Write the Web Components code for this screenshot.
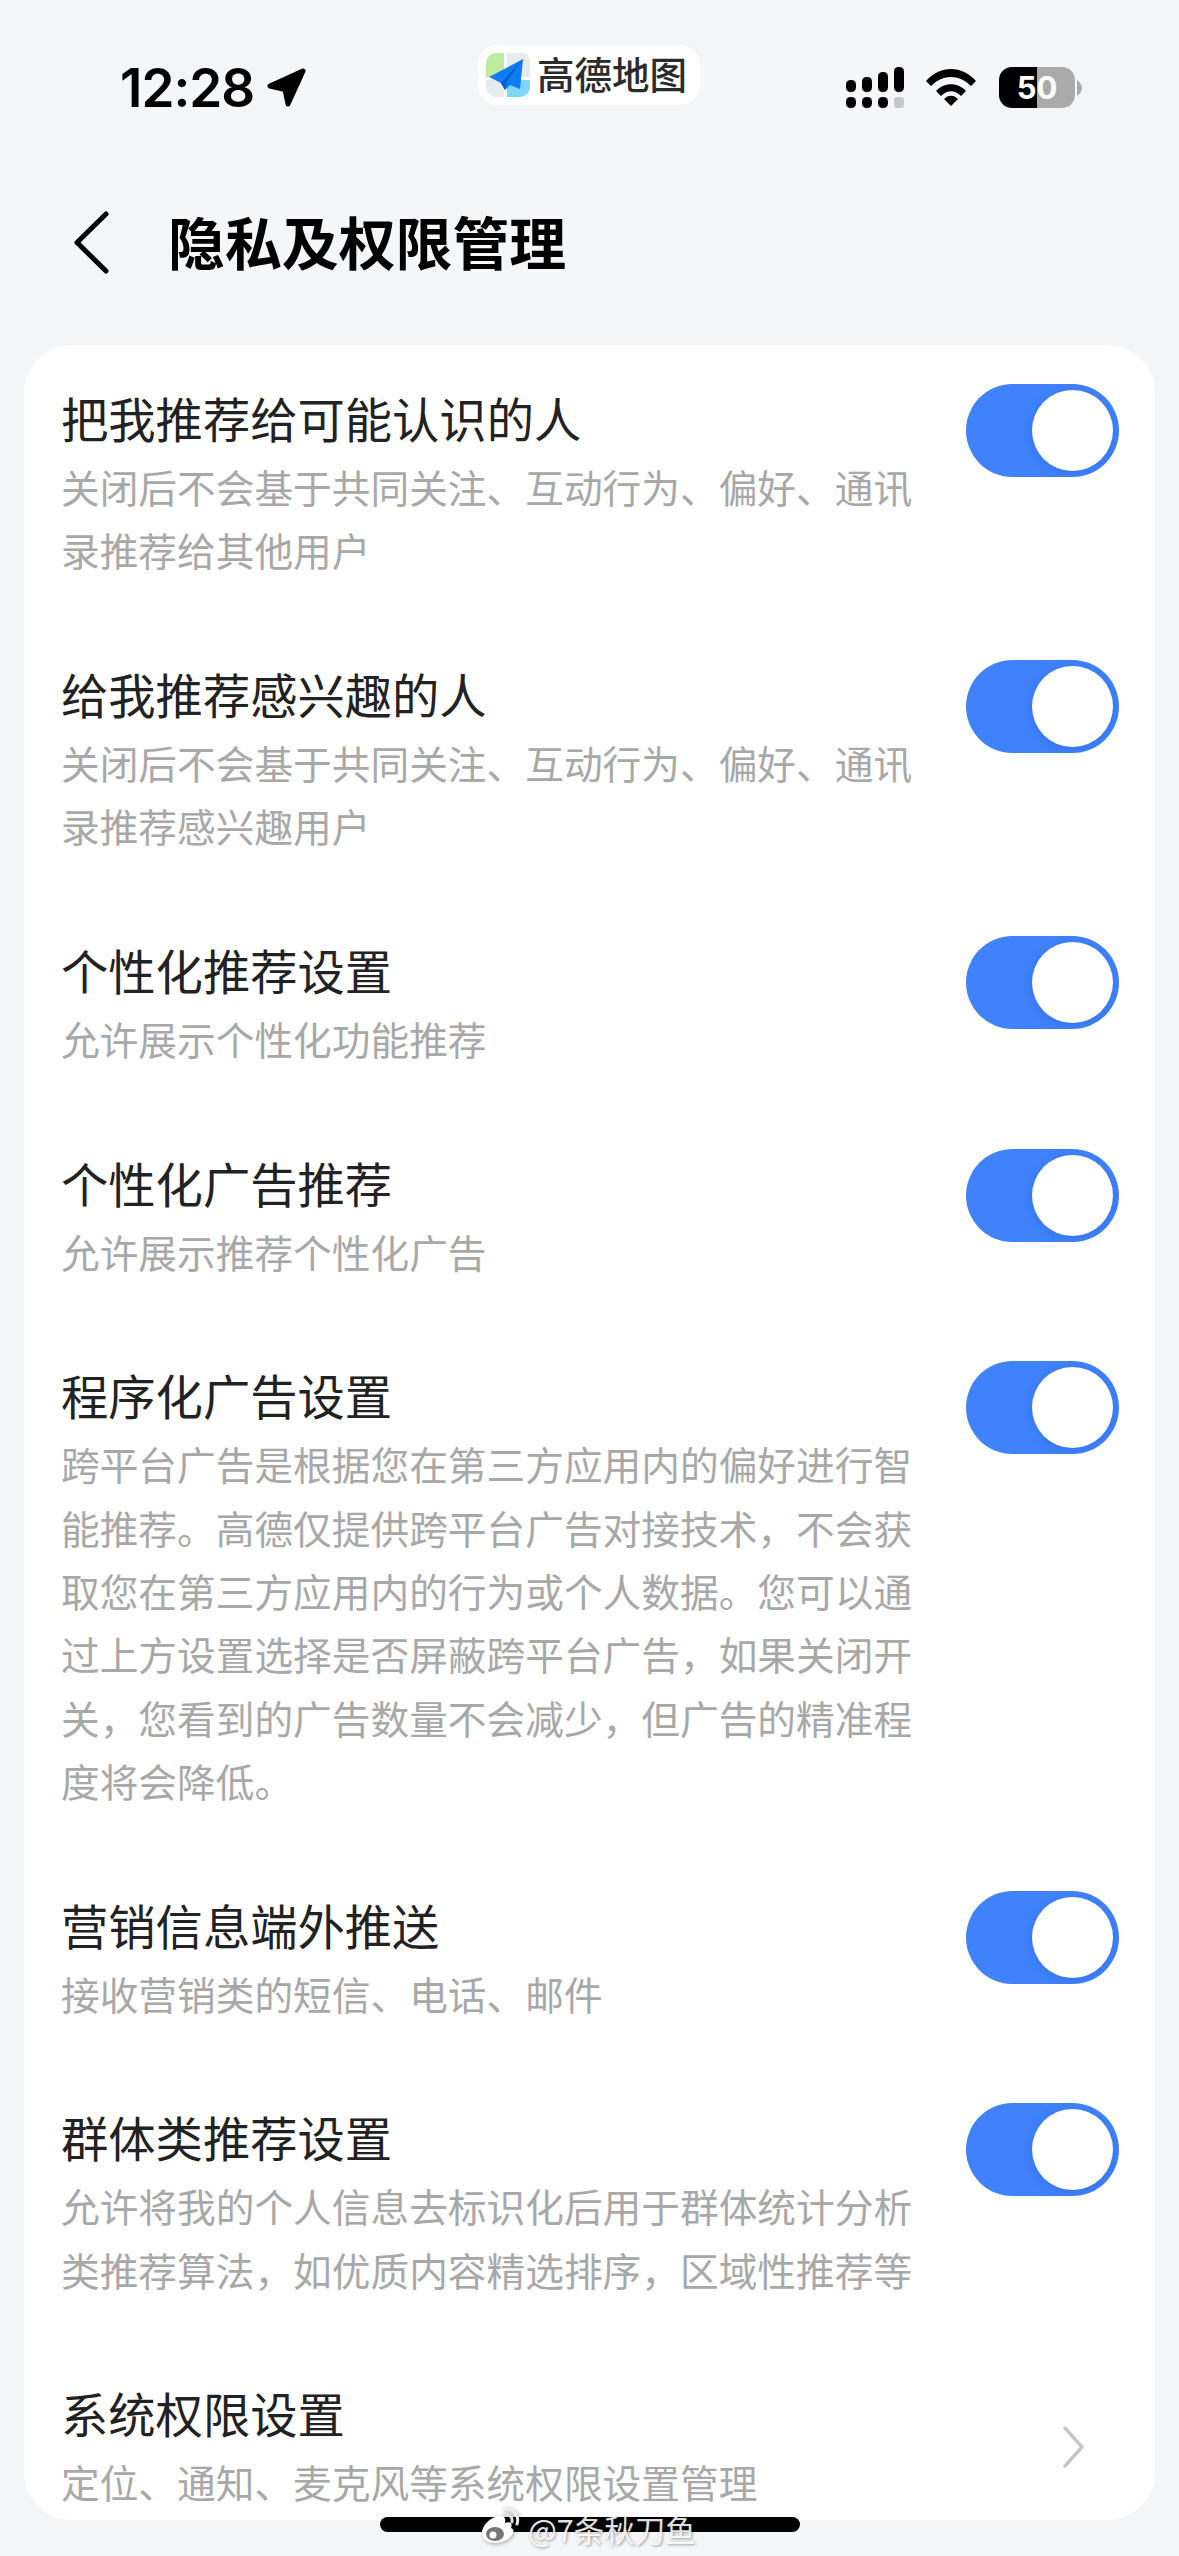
<!DOCTYPE html>
<html lang="zh">
<head>
<meta charset="utf-8">
<title>隐私及权限管理</title>
<style>
  html, body { margin: 0; height: 2556px; overflow: hidden; background: #f5f6f8; }
  body { font-family: "Noto Sans CJK SC", "Noto Sans", sans-serif; }
</style>
</head>
<body>
<privacy-page>
  <status-bar></status-bar>
  <nav-header>隐私及权限管理</nav-header>
  <settings-card>
    <setting-row>
      <span slot="title">把我推荐给可能认识的人</span>
      关闭后不会基于共同关注、互动行为、偏好、通讯录推荐给其他用户
      <toggle-switch slot="action"></toggle-switch>
    </setting-row>
    <setting-row>
      <span slot="title">给我推荐感兴趣的人</span>
      关闭后不会基于共同关注、互动行为、偏好、通讯录推荐感兴趣用户
      <toggle-switch slot="action"></toggle-switch>
    </setting-row>
    <setting-row>
      <span slot="title">个性化推荐设置</span>
      允许展示个性化功能推荐
      <toggle-switch slot="action"></toggle-switch>
    </setting-row>
    <setting-row>
      <span slot="title">个性化广告推荐</span>
      允许展示推荐个性化广告
      <toggle-switch slot="action"></toggle-switch>
    </setting-row>
    <setting-row>
      <span slot="title">程序化广告设置</span>
      跨平台广告是根据您在第三方应用内的偏好进行智能推荐。高德仅提供跨平台广告对接技术，不会获取您在第三方应用内的行为或个人数据。您可以通过上方设置选择是否屏蔽跨平台广告，如果关闭开关，您看到的广告数量不会减少，但广告的精准程度将会降低。
      <toggle-switch slot="action"></toggle-switch>
    </setting-row>
    <setting-row>
      <span slot="title">营销信息端外推送</span>
      接收营销类的短信、电话、邮件
      <toggle-switch slot="action"></toggle-switch>
    </setting-row>
    <setting-row>
      <span slot="title">群体类推荐设置</span>
      允许将我的个人信息去标识化后用于群体统计分析类推荐算法，如优质内容精选排序，区域性推荐等
      <toggle-switch slot="action"></toggle-switch>
    </setting-row>
    <setting-row last center-action>
      <span slot="title">系统权限设置</span>
      定位、通知、麦克风等系统权限设置管理
      <svg slot="action" width="153" height="42" viewBox="0 0 153 42" fill="none" stroke="#c6c6c6" stroke-width="3.4" stroke-linecap="round" stroke-linejoin="round"><path d="M99 2 L116 21 L99 40"/></svg>
    </setting-row>
  </settings-card>
  <home-indicator></home-indicator>
</privacy-page>

<script>
class PrivacyPage extends HTMLElement {
  connectedCallback() {
    this.attachShadow({ mode: 'open' });
    this.shadowRoot.innerHTML = `
      <style>
        :host {
          display: flex;
          flex-direction: column;
          position: relative;
          width: 1179px;
          height: 2556px;
          overflow: hidden;
          background: #f5f6f8;
        }
      </style>
      <slot></slot>
    `;
  }
}

class StatusBar extends HTMLElement {
  connectedCallback() {
    this.attachShadow({ mode: 'open' });
    this.shadowRoot.innerHTML = `
      <style>
        :host {
          display: flex;
          align-items: flex-start;
          height: 120px;
          box-sizing: border-box;
          padding: 45px 97px 0 120px;
          color: #000;
        }
        .left {
          display: flex;
          align-items: center;
          gap: 13px;
          width: 358px;
          height: 50px;
          margin-top: 18px;
        }
        .time {
          font: 600 53px/50px Inter, "Liberation Sans", sans-serif;
          letter-spacing: -1px;
        }
        .badge {
          display: flex;
          align-items: center;
          gap: 7px;
          width: 222px;
          height: 60px;
          box-sizing: border-box;
          padding-left: 8px;
          background: #fff;
          border-radius: 20px;
        }
        .badge span {
          font: 500 37.5px/44px "Noto Sans CJK SC", sans-serif;
          color: #2b2b2b;
          white-space: nowrap;
          margin-top: -5px;
        }
        .right {
          display: flex;
          align-items: center;
          margin-left: auto;
          height: 41px;
          margin-top: 22px;
        }
        .battery {
          width: 76px;
          height: 41px;
          margin-left: 23px;
          border-radius: 13px;
          overflow: hidden;
          background: linear-gradient(90deg, #000 0 50%, #ababab 50% 100%);
          color: #fff;
          font: 700 31px/41px Inter, "Liberation Sans", sans-serif;
          text-align: center;
        }
        .nub { margin-left: 2px; }
        .wifi { margin-left: 22px; }
      </style>
      <div class="left">
        <span class="time">12:28</span>
        <svg width="40" height="40" viewBox="0 0 40 40"><path d="M36 3 L3 18 L18 21.5 L21 36 Z" fill="#000" stroke="#000" stroke-width="5" stroke-linejoin="round"/></svg>
      </div>
      <div class="badge">
        <svg width="44" height="44" viewBox="0 0 44 44">
          <path d="M0 10 A10 10 0 0 1 10 0 H18 V24 H0 Z" fill="#bdeb9f"/>
          <path d="M21 0 H36 A8 8 0 0 1 44 8 V24 H21 Z" fill="#e6ecec"/>
          <path d="M0 27 H18 V44 H10 A10 10 0 0 1 0 34 Z" fill="#e6ecec"/>
          <path d="M21 27 H44 V34 A10 10 0 0 1 34 44 H21 Z" fill="#7fd6fb"/>
          <path d="M37 6 L3 24 L15 30 L19 37 L24 32 L34 36 Z" fill="#0f7cf2"/>
          <path d="M37 6 L15 30 L19 37 L21 28 Z" fill="#0a5fd0"/>
        </svg>
        <span>高德地图</span>
      </div>
      <div class="right">
        <svg width="58" height="41" viewBox="0 0 58 41" fill="#000">
          <rect x="0" y="13" width="10" height="12" rx="4.5"/>
          <rect x="16" y="10" width="10" height="15" rx="4.5"/>
          <rect x="32" y="5" width="10" height="20" rx="4.5"/>
          <rect x="48" y="0" width="10" height="25" rx="4.5"/>
          <rect x="0" y="30" width="10" height="11" rx="4.5"/>
          <rect x="16" y="30" width="10" height="11" rx="4.5"/>
          <rect x="32" y="30" width="10" height="11" rx="4.5"/>
          <rect x="48" y="30" width="10" height="11" rx="3" fill="#c8c8c8"/>
        </svg>
        <svg class="wifi" width="50" height="37" viewBox="0 0 50 37" fill="#000">
          <path d="M0 12 C14 -4 36 -4 50 12 L45 17 C33 5 17 5 5 17 Z"/>
          <path d="M10 22 C18 13 32 13 40 22 L35 27 C29 20.5 21 20.5 15 27 Z"/>
          <path d="M18 30 C22 25.5 28 25.5 32 30 L25 37 Z"/>
        </svg>
        <div class="battery">50</div>
        <svg class="nub" width="5" height="16" viewBox="0 0 5 16"><path d="M0 0 C3 2 5 5 5 8 C5 11 3 14 0 16 Z" fill="#ababab"/></svg>
      </div>
    `;
  }
}

class NavHeader extends HTMLElement {
  connectedCallback() {
    this.attachShadow({ mode: 'open' });
    this.shadowRoot.innerHTML = `
      <style>
        :host {
          display: flex;
          align-items: center;
          gap: 58px;
          height: 225px;
          box-sizing: border-box;
          padding: 20px 0 0 73px;
          color: #000;
        }
        svg { flex: none; }
        .title {
          font: 700 56.9px/80px "Noto Sans CJK SC", sans-serif;
          margin-top: -6px;
        }
      </style>
      <svg width="37" height="63" viewBox="0 0 37 63" fill="none" stroke="#000" stroke-width="5" stroke-linecap="round" stroke-linejoin="round"><path d="M33 3 L4 31.5 L33 60"/></svg>
      <div class="title"><slot></slot></div>
    `;
  }
}

class SettingsCard extends HTMLElement {
  connectedCallback() {
    this.attachShadow({ mode: 'open' });
    this.shadowRoot.innerHTML = `
      <style>
        :host {
          display: flex;
          flex-direction: column;
          box-sizing: border-box;
          margin: 0 24px;
          height: 2175px;
          padding: 39px 36px 0 37px;
          background: #fff;
          border-radius: 48px;
          overflow: hidden;
        }
      </style>
      <slot></slot>
    `;
  }
}

class SettingRow extends HTMLElement {
  connectedCallback() {
    this.attachShadow({ mode: 'open' });
    this.shadowRoot.innerHTML = `
      <style>
        :host {
          display: flex;
          justify-content: space-between;
          align-items: flex-start;
          padding-bottom: 78.2px;
        }
        :host([last]) { padding-bottom: 0; }
        :host([center-action]) { align-items: center; }
        .text { width: 862px; margin-top: -3px; }
        .title {
          font-size: 47.3px;
          line-height: 74px;
          color: #222;
        }
        .desc {
          font-size: 38.7px;
          line-height: 63.4px;
          color: #a8a8a8;
        }
      </style>
      <div class="text">
        <div class="title"><slot name="title"></slot></div>
        <div class="desc"><slot></slot></div>
      </div>
      <slot name="action"></slot>
    `;
  }
}

class ToggleSwitch extends HTMLElement {
  connectedCallback() {
    this.attachShadow({ mode: 'open' });
    this.shadowRoot.innerHTML = `
      <style>
        :host {
          display: flex;
          justify-content: flex-end;
          align-items: center;
          flex: none;
          width: 153px;
          height: 93px;
          box-sizing: border-box;
          padding-right: 6px;
          border-radius: 47px;
          background: #3f82fb;
          overflow: hidden;
        }
        .knob {
          width: 81px;
          height: 81px;
          border-radius: 50%;
          background: #fff;
          box-shadow: 0 2px 10px rgba(30, 70, 170, .25);
        }
      </style>
      <div class="knob"></div>
    `;
  }
}

class HomeIndicator extends HTMLElement {
  connectedCallback() {
    this.attachShadow({ mode: 'open' });
    this.shadowRoot.innerHTML = `
      <style>
        :host {
          position: absolute;
          left: 380px;
          top: 2517px;
          width: 420px;
          height: 15px;
          border-radius: 8px;
          background: #000;
        }
        .mark {
          position: absolute;
          left: 100px;
          top: -9px;
          display: flex;
          align-items: center;
          gap: 8px;
          color: rgba(255,255,255,.9);
          font: 400 30.5px/30px "Noto Sans CJK SC", sans-serif;
          text-shadow: 1px 1px 3px rgba(0,0,0,.4);
          white-space: nowrap;
        }
        svg { filter: drop-shadow(1px 1px 2px rgba(0,0,0,.35)); }
        span { margin-top: 6px; }
      </style>
      <div class="mark">
        <svg width="40" height="36" viewBox="0 0 40 36" fill="none">
          <path d="M2 25 C2 17 12 8 20 8 C25 8 26 11 25 15 C30 13 33 15 31 20 C34 21 34 24 32 27 C28 33 20 35 14 35 C7 35 2 31 2 25 Z" fill="#fff"/>
          <ellipse cx="15" cy="26" rx="9" ry="7" fill="#777"/>
          <circle cx="13" cy="27" r="3.5" fill="#fff"/>
          <path d="M25 7 C29 6 33 9 32 14" stroke="#ddd" stroke-width="3" stroke-linecap="round"/>
          <path d="M24 1 C32 0 40 7 37 16" stroke="#eee" stroke-width="3" stroke-linecap="round"/>
        </svg>
        <span>@7条秋刀鱼</span>
      </div>
    `;
  }
}

customElements.define('privacy-page', PrivacyPage);
customElements.define('status-bar', StatusBar);
customElements.define('nav-header', NavHeader);
customElements.define('settings-card', SettingsCard);
customElements.define('setting-row', SettingRow);
customElements.define('toggle-switch', ToggleSwitch);
customElements.define('home-indicator', HomeIndicator);
</script>
</body>
</html>
